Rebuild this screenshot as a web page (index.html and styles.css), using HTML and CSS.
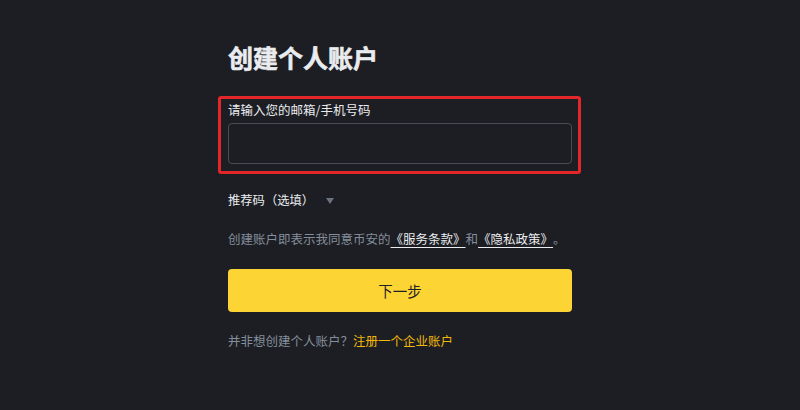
FILE: index.html
```html
<!DOCTYPE html>
<html lang="zh-CN">
<head>
<meta charset="utf-8">
<title>创建个人账户</title>
<link rel="stylesheet" href="styles.css">
</head>
<body>
<main class="page">
  <h1 class="title">创建个人账户</h1>
  <div class="field highlighted">
    <label class="field-label" for="account">请输入您的邮箱/手机号码</label>
    <input class="field-input" id="account" type="text">
  </div>
  <div class="referral">
    <span class="referral-text">推荐码（选填）</span>
    <span class="caret"></span>
  </div>
  <p class="terms">创建账户即表示我同意币安的<a class="terms-link" href="#">《服务条款》</a>和<a class="terms-link" href="#">《隐私政策》</a>。</p>
  <button class="next-btn" type="button">下一步</button>
  <p class="alt">并非想创建个人账户？<a class="alt-link" href="#">注册一个企业账户</a></p>
</main>
</body>
</html>
```

FILE: styles.css
```css
html, body {
  margin: 0;
  padding: 0;
}
body {
  background: #1d1e23;
  font-family: "Noto Sans CJK SC", "Noto Sans", sans-serif;
  color: #eaecef;
  height: 410px;
  overflow: hidden;
  text-spacing-trim: space-all;
}
.page {
  width: 344px;
  margin: 0 auto;
  padding-top: 42px;
  display: flex;
  flex-direction: column;
}
.title {
  margin: 0;
  font-size: 25px;
  line-height: 30px;
  font-weight: 700;
  color: #eaecef;
  -webkit-text-stroke: 0.6px #eaecef;
}
.field {
  margin-top: 30px;
  display: flex;
  flex-direction: column;
  position: relative;
}
.highlighted::after {
  content: "";
  position: absolute;
  top: -6px;
  bottom: -10px;
  left: -10px;
  right: -9px;
  border: 3px solid #e3262a;
  border-radius: 3px;
  pointer-events: none;
}
.field-label {
  font-size: 12.5px;
  line-height: 16px;
  color: #eaecef;
}
.field-input {
  margin-top: 5px;
  height: 41px;
  box-sizing: border-box;
  border: 1px solid #474d57;
  border-radius: 4px;
  background: #1d1e23;
  outline: none;
  color: #eaecef;
  padding: 0 12px;
}
.referral {
  margin-top: 28px;
  display: flex;
  align-items: center;
  height: 16px;
}
.referral-text {
  font-size: 12.3px;
  line-height: 16px;
  color: #eaecef;
}
.caret {
  margin-left: 12px;
  width: 0;
  height: 0;
  border-left: 4.5px solid transparent;
  border-right: 4.5px solid transparent;
  border-top: 6px solid #6b7280;
  margin-top: 1px;
}
.terms {
  margin: 22px 0 0;
  font-size: 12.5px;
  line-height: 18px;
  color: #848e9c;
  white-space: nowrap;
}
.terms-link {
  color: #eaecef;
  text-decoration: underline;
  text-underline-offset: 3px;
}
.next-btn {
  margin-top: 21px;
  height: 43px;
  border: none;
  border-radius: 4px;
  background: #fcd535;
  color: #1e2026;
  font-family: inherit;
  font-size: 14.5px;
  cursor: pointer;
}
.alt {
  margin: 20px 0 0;
  font-size: 12.5px;
  line-height: 18px;
  color: #848e9c;
}
.alt-link {
  color: #f0b90b;
  text-decoration: none;
}
```
